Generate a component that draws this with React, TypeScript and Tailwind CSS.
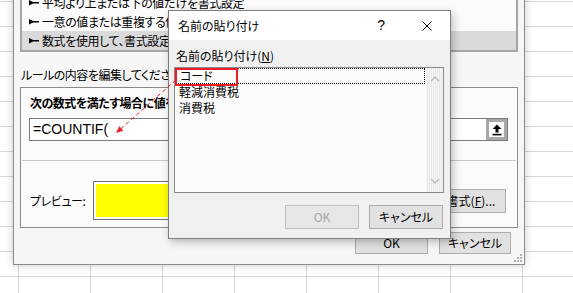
const jp = "font-['Noto_Sans_CJK_JP',sans-serif] [font-feature-settings:'palt']";

const cols = [19, 72, 72, 72, 72, 72, 72, 72, 72];
const rowHeights = [2, 25, 25, 25, 25, 25, 25, 25, 25, 25, 25, 25, 25];

const Sheet = () => (
    <div className="flex flex-col">
        {rowHeights.map((h, r) => (
            <div key={r} className="flex" style={{ height: h }}>
                {cols.map((w, c) => (
                    <div key={c} className="shrink-0 border-r border-b border-[#d6d6d6]" style={{ width: w }} />
                ))}
            </div>
        ))}
    </div>
);

const RuleIcon = () => (
    <svg width="10" height="6" viewBox="0 0 10 6" className="shrink-0">
        <polygon points="0,0 4,2 10,2 10,3.4 4,3.4 0,5.4" fill="#000" />
    </svg>
);

const Btn = ({ children, w, h, disabled }: { children: React.ReactNode; w: string; h: string; disabled?: boolean }) => (
    <div className={`${w} ${h} flex items-center justify-center border ${disabled ? "border-[#bfbfbf] bg-[#e6e6e6] text-[#a3a3a3]" : "border-[#adadad] bg-[#e1e1e1] text-black"}`}>
        {children}
    </div>
);

const BackDialog = () => (
    <div className={`absolute left-[13px] top-[-30px] w-[512px] h-[295px] border border-[#8c8c8c] bg-[#f6f6f6] shadow-[0_0_8px_rgba(0,0,0,0.22)] px-[6px] text-[12px] text-black ${jp}`}>
        <div className="mt-[20px] border-2 border-[#a6a6a6] bg-[#fbfbfb] tracking-[-0.4px]">
            <div className="h-[19px] flex items-center pl-[7px] gap-[3px]"><RuleIcon /><span>平均より上または下の値だけを書式設定</span></div>
            <div className="h-[19px] flex items-center pl-[7px] gap-[3px]"><RuleIcon /><span>一意の値または重複する値だけを書式設定</span></div>
            <div className="h-[19px] flex items-center pl-[7px] gap-[3px] bg-[#dadada]"><RuleIcon /><span>数式を使用して、書式設定するセルを決定</span></div>
        </div>
        <div className="mt-[15px] h-[16px] leading-[16px] pl-[1px] tracking-[-0.5px]">ルールの内容を編集してください:</div>
        <div className="mt-[4px] border border-[#8a8a8a] bg-[#fbfbfb] pb-[7px]">
            <div className="mt-[7px] h-[16px] leading-[16px] pl-[9px] font-bold tracking-[-0.5px]">次の数式を満たす場合に値を書式設定(<span className="underline">O</span>):</div>
            <div className="mt-[7px] ml-[8px] w-[479px] h-[23px] flex border border-[#7a7a7a] bg-white">
                <div className="flex-1 pl-[3px] flex items-center font-['Liberation_Sans',sans-serif] text-[14px]">=COUNTIF(</div>
                <div className="w-[21px] h-full border-[3px] border-[#a9a9a9] bg-white flex items-center justify-center">
                    <svg width="10" height="12" viewBox="0 0 10 12">
                        <polygon points="5,0.5 9.5,5 6.5,5 6.5,8.5 3.5,8.5 3.5,5 0.5,5" fill="#000" />
                        <rect x="0.5" y="9.8" width="9" height="1.6" fill="#000" />
                    </svg>
                </div>
            </div>
            <div className="mt-[19px] mx-[1px] h-px bg-[#c9c9c9]" />
            <div className="mt-[20px] flex items-center pl-[9px] pr-[11px]">
                <div className="w-[63px] tracking-[-0.4px]">プレビュー:</div>
                <div className="flex-1 h-[39px] border border-[#6f6f6f] bg-white p-[2px]">
                    <div className="h-full bg-[#ffff00]" />
                </div>
                <div className="ml-[7px]">
                    <Btn w="w-[70px]" h="h-[24px]">書式(<span className="underline">F</span>)...</Btn>
                </div>
            </div>
        </div>
        <div className="mt-[4px] flex justify-end gap-[11px] pr-[7px]">
            <Btn w="w-[73px]" h="h-[22px]">OK</Btn>
            <Btn w="w-[72px]" h="h-[22px]">キャンセル</Btn>
        </div>
        <svg className="absolute right-[2px] bottom-[2px]" width="8" height="8" viewBox="0 0 8 8">
            <rect x="6" y="0" width="2" height="2" fill="#b5b5b5" />
            <rect x="3" y="3" width="2" height="2" fill="#b5b5b5" />
            <rect x="6" y="3" width="2" height="2" fill="#b5b5b5" />
            <rect x="0" y="6" width="2" height="2" fill="#b5b5b5" />
            <rect x="3" y="6" width="2" height="2" fill="#b5b5b5" />
            <rect x="6" y="6" width="2" height="2" fill="#b5b5b5" />
        </svg>
    </div>
);

const Chevron = ({ down }: { down?: boolean }) => (
    <svg width="10" height="6" viewBox="0 0 10 6">
        <polyline points={down ? "1,1 5,5 9,1" : "1,5 5,1 9,5"} fill="none" stroke="#bdbdbd" strokeWidth="1.5" />
    </svg>
);

const PasteNameDialog = () => (
    <div className={`absolute left-[168px] top-[10px] w-[283px] h-[229px] border border-[#7d7d7d] bg-[#f0f0f0] shadow-[2px_3px_8px_rgba(0,0,0,0.25)] text-[12px] text-black ${jp}`}>
        <div className="h-[29px] bg-white flex items-center pl-[9px] pr-[18px]">
            <span>名前の貼り付け</span>
            <span className="ml-auto font-['Liberation_Sans',sans-serif] text-[14px]">?</span>
            <svg className="ml-[37px]" width="10" height="10" viewBox="0 0 10 10">
                <path d="M0.5 0.5 L9.5 9.5 M9.5 0.5 L0.5 9.5" stroke="#000" strokeWidth="1" />
            </svg>
        </div>
        <div className="mt-[8px] h-[16px] leading-[16px] pl-[7px]">名前の貼り付け(<span className="underline">N</span>)</div>
        <div className="mt-[3px] ml-[5px] w-[270px] h-[126px] border border-[#8a8a8a] bg-[#fcfcfc] flex">
            <div className="flex-1 relative">
                <div className="h-[16px] leading-[16px] pl-[4px] mx-[1px] outline outline-1 outline-dotted outline-black -outline-offset-1">コード</div>
                <div className="h-[16px] leading-[16px] pl-[4px]">軽減消費税</div>
                <div className="h-[16px] leading-[16px] pl-[4px]">消費税</div>
                <div className="absolute left-0 top-0 w-[63px] h-[18px] border-2 border-[#ee1c25]" />
            </div>
            <div className="w-[17px] flex flex-col items-center justify-between py-[8px] bg-[repeating-linear-gradient(90deg,#f6f6f6_0px,#f6f6f6_1px,#e8e8e8_1px,#e8e8e8_2px)]">
                <Chevron />
                <Chevron down />
            </div>
        </div>
        <div className="mt-[12px] flex justify-end gap-[10px] pr-[7px]">
            <Btn w="w-[74px]" h="h-[24px]" disabled>OK</Btn>
            <Btn w="w-[74px]" h="h-[24px]">キャンセル</Btn>
        </div>
    </div>
);

const Arrow = () => (
    <svg className="absolute inset-0 pointer-events-none" width="573" height="293" viewBox="0 0 573 293">
        <line x1="176" y1="80" x2="120" y2="129.5" stroke="#e8202a" strokeWidth="1" strokeDasharray="4 3" />
        <polygon points="116,133 123.3,130.7 119.3,126.2" fill="#e8202a" />
    </svg>
);

export default function App() {
    return (
        <div className="relative w-[573px] h-[293px] overflow-hidden bg-white">
            <Sheet />
            <BackDialog />
            <PasteNameDialog />
            <Arrow />
        </div>
    );
}
